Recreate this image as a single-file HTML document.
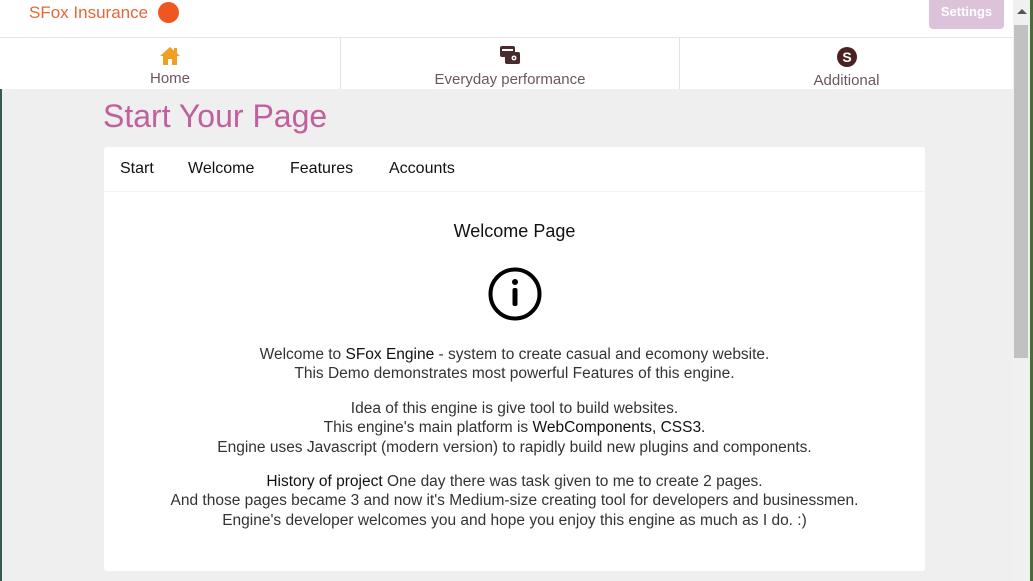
<!DOCTYPE html>
<html><head><meta charset="utf-8"><style>
*{margin:0;padding:0;box-sizing:border-box}
body{width:1033px;height:581px;overflow:hidden;background:#efefef;font-family:"Liberation Sans",sans-serif;position:relative}
.abs{position:absolute}
#hdr{left:0;top:0;width:1013px;height:38px;background:#fff;border-bottom:1px solid #e4e4e4}
#nav{left:0;top:38px;width:1013px;height:51px;background:#fff}
.tab{position:absolute;top:0;height:51px;text-align:center;color:#6b5662;font-size:15px;font-weight:300}
.sep{position:absolute;top:0;width:1px;height:51px;background:#e2e2e2}
#sb{left:1013px;top:0;width:17px;height:581px;background:#f0f0f0}
#thumb{left:1014px;top:25px;width:14px;height:333px;background:#c1c1c1}
#card{left:104px;top:147px;width:821px;height:424px;background:#fff;border-radius:3px}
.t{position:absolute;left:104px;width:821px;text-align:center;font-size:15.5px;color:#333;font-weight:300}
b{font-weight:400;color:#111}
</style></head><body>
<div class="abs" style="left:0;top:0;width:2px;height:581px;background:#3a5a4a"></div>
<div class="abs" style="left:1030px;top:0;width:3px;height:581px;background:#4a6a3a"></div>
<div class="abs" id="hdr"></div>
<div class="abs" style="left:29px;top:3px;font-size:17px;color:#e0683a">SFox Insurance</div>
<div class="abs" style="left:158px;top:2px;width:21px;height:21px;border-radius:50%;background:#f0571f"></div>
<div class="abs" style="left:929px;top:0;width:75px;height:29px;background:#dcc3da;border-radius:0 0 4px 4px;color:#fff;font-weight:bold;font-size:13px;text-align:center;line-height:24px">Settings</div>
<div class="abs" id="nav">
 <div class="tab" style="left:0;width:340px">
  <svg width="22" height="20" viewBox="0 0 22 20" style="margin-top:8px;display:block;margin-left:auto;margin-right:auto"><path d="M11 1 L1 10 L4 10 L4 19 L9 19 L9 13 L13 13 L13 19 L18 19 L18 10 L21 10 Z" fill="#f0a020"/><rect x="15" y="2" width="3" height="5" fill="#f0a020"/></svg>
  <div style="margin-top:4px">Home</div></div>
 <div class="sep" style="left:340px"></div>
 <div class="tab" style="left:341px;width:338px">
  <svg width="22" height="20" viewBox="0 0 22 20" style="margin-top:7px;display:block;margin-left:auto;margin-right:auto"><rect x="1" y="1" width="15" height="11" rx="2" fill="#4a2a2a"/><rect x="3" y="4" width="11" height="2" fill="#fff"/><rect x="6" y="7" width="15" height="12" rx="2" fill="#4a2a2a"/><circle cx="15" cy="13" r="2.5" fill="#fff"/><circle cx="15" cy="13" r="1" fill="#4a2a2a"/></svg>
  <div style="margin-top:6px">Everyday performance</div></div>
 <div class="sep" style="left:679px"></div>
 <div class="tab" style="left:680px;width:333px">
  <svg width="22" height="22" viewBox="0 0 22 22" style="margin-top:8px;display:block;margin-left:auto;margin-right:auto"><circle cx="11" cy="11" r="10" fill="#4a2222"/><text x="11" y="16" font-size="14" font-weight="bold" fill="#fff" text-anchor="middle" font-family="Liberation Sans">S</text></svg>
  <div style="margin-top:4px">Additional</div></div>
</div>
<div class="abs" id="sb"></div>
<div class="abs" id="thumb"></div>
<div class="abs" style="left:1017px;top:9px;width:0;height:0;border-left:5px solid transparent;border-right:5px solid transparent;border-bottom:5px solid #555"></div>
<div class="abs" style="left:103px;top:98px;font-size:32px;color:#c0609e;font-weight:300">Start Your Page</div>
<div class="abs" id="card"></div>
<div class="abs" style="left:104px;top:191px;width:821px;height:1px;background:#f3f3f3"></div>
<div class="abs" style="left:120px;top:160px;font-size:16px;color:#111">Start</div>
<div class="abs" style="left:188px;top:160px;font-size:16px;color:#111">Welcome</div>
<div class="abs" style="left:290px;top:160px;font-size:16px;color:#111">Features</div>
<div class="abs" style="left:389px;top:160px;font-size:16px;color:#111">Accounts</div>
<div class="t" style="top:221px;font-size:18px;color:#111;font-weight:400">Welcome Page</div>
<svg class="abs" style="left:487px;top:266px" width="56" height="56" viewBox="0 0 56 56"><circle cx="28" cy="28" r="24.5" fill="none" stroke="#000" stroke-width="4"/><circle cx="28" cy="16" r="3" fill="#000"/><rect x="25.5" y="22" width="5" height="18" rx="2" fill="#000"/></svg>
<div class="t" style="top:345px;line-height:19.4px">Welcome to <b>SFox Engine</b> - system to create casual and ecomony website.<br>This Demo demonstrates most powerful Features of this engine.</div>
<div class="t" style="top:399px;line-height:19.4px">Idea of this engine is give tool to build websites.<br>This engine's main platform is <b>WebComponents, CSS3.</b><br>Engine uses Javascript (modern version) to rapidly build new plugins and components.</div>
<div class="t" style="top:472px;line-height:19.4px"><b>History of project</b> One day there was task given to me to create 2 pages.<br>And those pages became 3 and now it's Medium-size creating tool for developers and businessmen.<br>Engine's developer welcomes you and hope you enjoy this engine as much as I do. :)</div>
</body></html>
